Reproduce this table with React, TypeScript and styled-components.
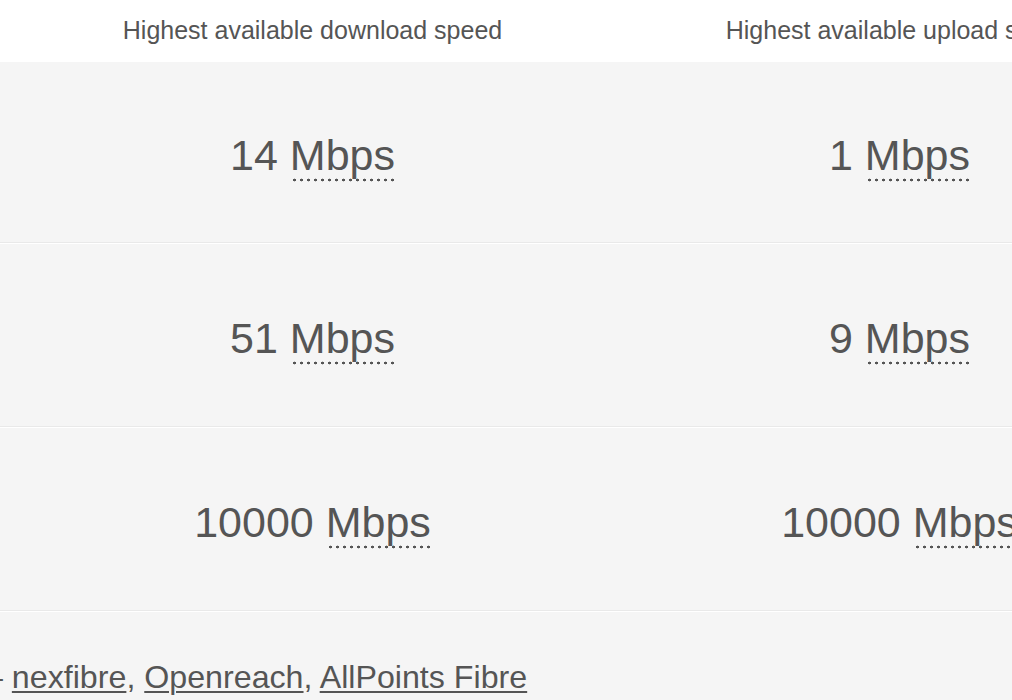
import React from "react";
import styled, { createGlobalStyle } from "styled-components";

const Global = createGlobalStyle`
  html, body {
    margin: 0;
    padding: 0;
    background: #ffffff;
    overflow: hidden;
  }
  body {
    font-family: "Liberation Sans", Arial, sans-serif;
    color: #555555;
  }
`;

const Page = styled.div`
  width: 1012px;
  height: 700px;
  overflow: hidden;
  display: flex;
  flex-direction: column;
`;

const Grid = styled.div`
  display: grid;
  grid-template-columns: 587px 587px;
  padding-left: 19px;
  width: max-content;
`;

const HeaderRow = styled(Grid)`
  height: 62px;
  background: #ffffff;
  align-items: center;
  padding-bottom: 2px;
  box-sizing: border-box;
`;

const HeaderCell = styled.div`
  font-size: 25px;
  line-height: 30px;
  text-align: center;
  color: #555555;
  white-space: nowrap;
`;

const Row = styled(Grid)<{ $first?: boolean }>`
  box-sizing: border-box;
  height: ${(p) => (p.$first ? "181px" : "184px")};
  background: #f5f5f5;
  border-top: ${(p) => (p.$first ? "0" : "1px solid #ffffff")};
  border-bottom: 1px solid #e9e9e9;
  align-items: center;
`;

const ValueCell = styled.div`
  font-size: 43px;
  line-height: 50px;
  padding-top: 5px;
  text-align: center;
  color: #555555;
  white-space: nowrap;
`;

const Unit = styled.abbr`
  text-decoration: none;
  padding-bottom: 3px;
  background-image: radial-gradient(circle, #555555 1.3px, transparent 1.6px);
  background-size: 7px 4px;
  background-repeat: repeat-x;
  background-position: 1px 100%;
`;

const Footer = styled.div`
  flex: 1;
  background: #f5f5f5;
  border-top: 1px solid #ffffff;
  padding-top: 47px;
  font-size: 32.2px;
  line-height: 36px;
  white-space: nowrap;
  overflow: hidden;
`;

const FooterText = styled.p`
  margin: 0 0 0 -15px;
  color: #555555;
`;

const Link = styled.a`
  color: #555555;
  text-decoration: underline;
  text-underline-offset: 3px;
  text-decoration-thickness: 2px;
`;

const rows = [
  { down: "14", up: "1" },
  { down: "51", up: "9" },
  { down: "10000", up: "10000" },
];

export default function App() {
  return (
    <>
      <Global />
      <Page>
        <HeaderRow>
          <HeaderCell>Highest available download speed</HeaderCell>
          <HeaderCell>Highest available upload speed</HeaderCell>
        </HeaderRow>
        {rows.map((r, i) => (
          <Row key={i} $first={i === 0}>
            <ValueCell>
              {r.down} <Unit title="Megabits per second">Mbps</Unit>
            </ValueCell>
            <ValueCell>
              {r.up} <Unit title="Megabits per second">Mbps</Unit>
            </ValueCell>
          </Row>
        ))}
        <Footer>
          <FooterText>
            – <Link href="#">nexfibre</Link>, <Link href="#">Openreach</Link>,{" "}
            <Link href="#">AllPoints Fibre</Link>
          </FooterText>
        </Footer>
      </Page>
    </>
  );
}
